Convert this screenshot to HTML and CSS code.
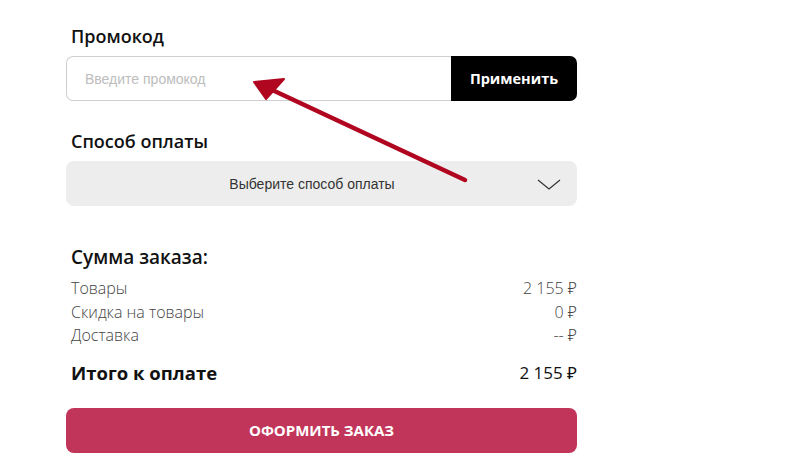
FILE: index.html
```html
<!DOCTYPE html>
<html lang="ru">
<head>
<meta charset="utf-8">
<link rel="stylesheet" href="styles.css">
</head>
<body>
<div class="page">
  <div class="checkout">
    <h3 class="label">Промокод</h3>
    <div class="promo">
      <input class="promo-input" type="text" placeholder="Введите промокод">
      <button class="promo-btn">Применить</button>
    </div>

    <h3 class="label label-pay">Способ оплаты</h3>
    <div class="select">
      <span class="select-text">Выберите способ оплаты</span>
      <svg class="chevron" width="24" height="12" viewBox="0 0 24 12"><path d="M1 1 L12 10 L23 1" fill="none" stroke="#333" stroke-width="1.2"/></svg>
    </div>

    <h3 class="label label-sum">Сумма заказа:</h3>
    <div class="rows">
      <div class="row"><span>Товары</span><span>2 155 ₽</span></div>
      <div class="row"><span>Скидка на товары</span><span>0 ₽</span></div>
      <div class="row"><span>Доставка</span><span>-- ₽</span></div>
    </div>
    <div class="total"><span>Итого к оплате</span><span class="total-val">2 155 ₽</span></div>

    <button class="order-btn">ОФОРМИТЬ ЗАКАЗ</button>
  </div>

  <svg class="annot" width="811" height="474" viewBox="0 0 811 474">
    <line x1="465" y1="180" x2="268" y2="88" stroke="#b0061f" stroke-width="4.5" stroke-linecap="round"/>
    <polygon points="254,82 284,79 266,99" fill="#b0061f" stroke="#b0061f" stroke-width="2" stroke-linejoin="round"/>
  </svg>
</div>
</body>
</html>
```

FILE: styles.css
```css
html, body {
  margin: 0;
  padding: 0;
  background: #fff;
}
.page {
  position: relative;
  width: 811px;
  height: 474px;
  overflow: hidden;
}
.checkout {
  width: 511px;
  margin-left: 66px;
  padding-top: 24px;
  font-family: "Open Sans", "Noto Sans", sans-serif;
  color: #111;
}
.label {
  margin: 0 0 8px 5px;
  font-size: 18px;
  line-height: 24px;
  font-weight: 600;
  color: #111;
}
.label-pay { margin-top: 28px; }
.label-sum { margin-top: 39px; font-size: 19px; margin-bottom: 8px; }
.promo {
  display: flex;
  height: 45px;
}
.promo-input {
  flex: 1;
  box-sizing: border-box;
  height: 45px;
  border: 1px solid #cfcfcf;
  border-right: none;
  border-radius: 7px 0 0 7px;
  padding: 0 0 0 18px;
  font-family: "Liberation Sans", Arial, sans-serif;
  font-size: 14px;
  outline: none;
}
.promo-input::placeholder { color: #bdbdbd; }
.promo-btn {
  width: 126px;
  border: none;
  background: #000;
  color: #fff;
  border-radius: 0 7px 7px 0;
  font-family: "Open Sans", sans-serif;
  font-weight: 700;
  font-size: 14.5px;
  padding: 0;
}
.select {
  position: relative;
  box-sizing: border-box;
  height: 45px;
  padding-right: 19px;
  background: #ededed;
  border-radius: 8px;
  display: flex;
  align-items: center;
  justify-content: center;
}
.select-text {
  font-family: "Liberation Sans", Arial, sans-serif;
  font-size: 14px;
  color: #333;
}
.chevron {
  position: absolute;
  right: 16px;
  top: 18px;
}
.rows { margin-top: 0; }
.row, .total {
  display: flex;
  justify-content: space-between;
  padding: 0 0 0 5px;
}
.row {
  font-size: 16px;
  line-height: 23.5px;
  font-weight: 300;
  color: #444;
}
.total {
  margin-top: 13px;
  font-size: 18.5px;
  line-height: 24px;
  font-weight: 700;
  color: #111;
}
.total-val { font-size: 17px; font-weight: 400; }
.order-btn {
  display: block;
  width: 100%;
  height: 45px;
  margin-top: 23px;
  border: none;
  border-radius: 8px;
  background: #c2355b;
  color: #fff;
  font-family: "Open Sans", sans-serif;
  font-weight: 700;
  font-size: 15px;
}
.annot {
  position: absolute;
  left: 0;
  top: 0;
  pointer-events: none;
}
```
